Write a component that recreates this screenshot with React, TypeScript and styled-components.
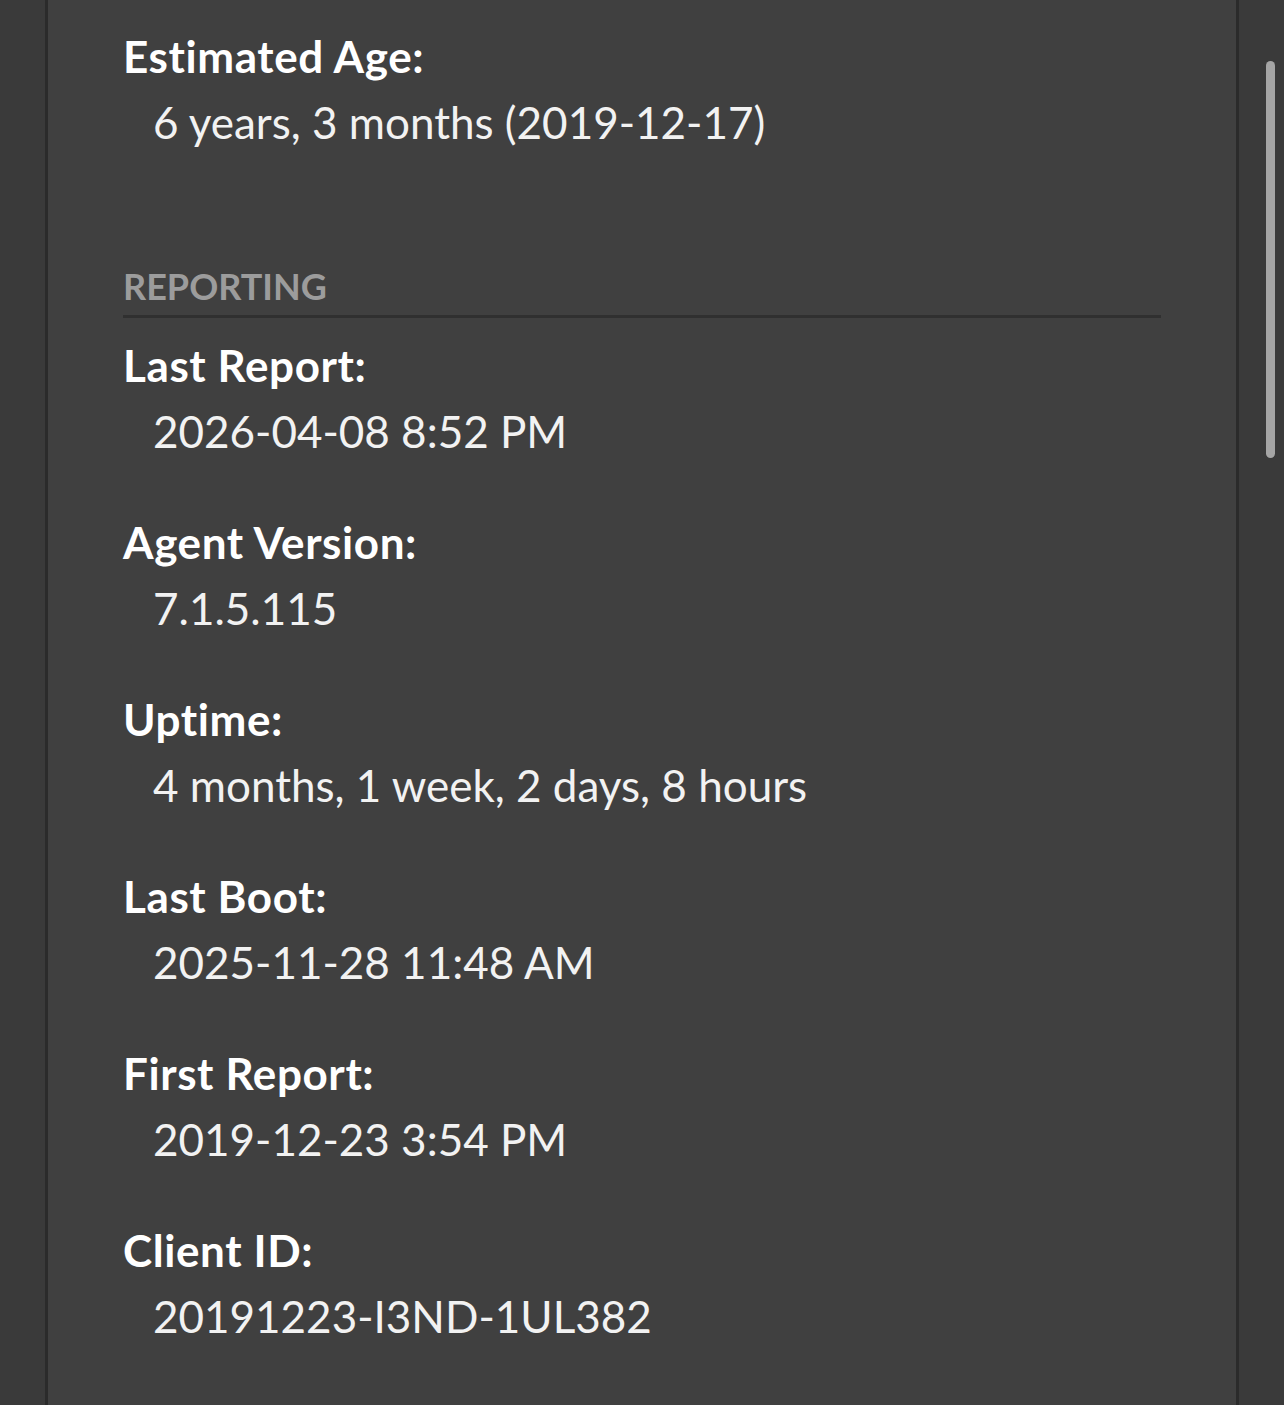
import styled, { createGlobalStyle } from 'styled-components';
import { FunctionComponent } from 'react';

const GlobalStyle = createGlobalStyle`
  html, body {
    margin: 0;
    padding: 0;
    background: #3a3a3a;
    overflow: hidden;
  }
  body {
    font-family: Lato, "Open Sans", sans-serif;
  }
`;

const Page = styled.div`
  display: flex;
  height: 1405px;
  overflow: hidden;
`;

const Panel = styled.div`
  margin-left: 45px;
  width: 1194px;
  box-sizing: border-box;
  background: #404040;
  border-left: 3px solid #2b2b2b;
  border-right: 3px solid #2b2b2b;
  padding: 23px 75px 0 75px;
`;

const Field = styled.div`
  margin-bottom: 45px;
`;

const Label = styled.div`
  font-size: 44px;
  font-weight: 700;
  line-height: 66px;
  letter-spacing: 0.6px;
  color: #ffffff;
`;

const Value = styled.div`
  font-size: 44px;
  font-weight: 400;
  line-height: 66px;
  color: #f2f2f2;
  margin-left: 30px;
`;

const SectionHeader = styled.div`
  margin-top: 110px;
  margin-bottom: 14px;
  padding-bottom: 7px;
  border-bottom: 3px solid #303030;
  font-size: 36px;
  font-weight: 700;
  line-height: 43px;
  color: #9c9c9c;
  text-transform: uppercase;
`;

const ScrollThumb = styled.div`
  position: fixed;
  right: 9px;
  top: 61px;
  width: 9px;
  height: 397px;
  border-radius: 5px;
  background: #a5a5a5;
`;

interface Item {
  label: string;
  value: string;
}

const reporting: Item[] = [
  { label: 'Last Report:', value: '2026-04-08 8:52 PM' },
  { label: 'Agent Version:', value: '7.1.5.115' },
  { label: 'Uptime:', value: '4 months, 1 week, 2 days, 8 hours' },
  { label: 'Last Boot:', value: '2025-11-28 11:48 AM' },
  { label: 'First Report:', value: '2019-12-23 3:54 PM' },
  { label: 'Client ID:', value: '20191223-I3ND-1UL382' },
];

const App: FunctionComponent = () => {
  return (
    <>
      <GlobalStyle />
      <Page>
        <Panel>
          <Field>
            <Label>Estimated Age:</Label>
            <Value>6 years, 3 months (2019-12-17)</Value>
          </Field>

          <SectionHeader>Reporting</SectionHeader>

          {reporting.map((item) => (
            <Field key={item.label}>
              <Label>{item.label}</Label>
              <Value>{item.value}</Value>
            </Field>
          ))}
        </Panel>
      </Page>
      <ScrollThumb />
    </>
  );
};

export default App;
